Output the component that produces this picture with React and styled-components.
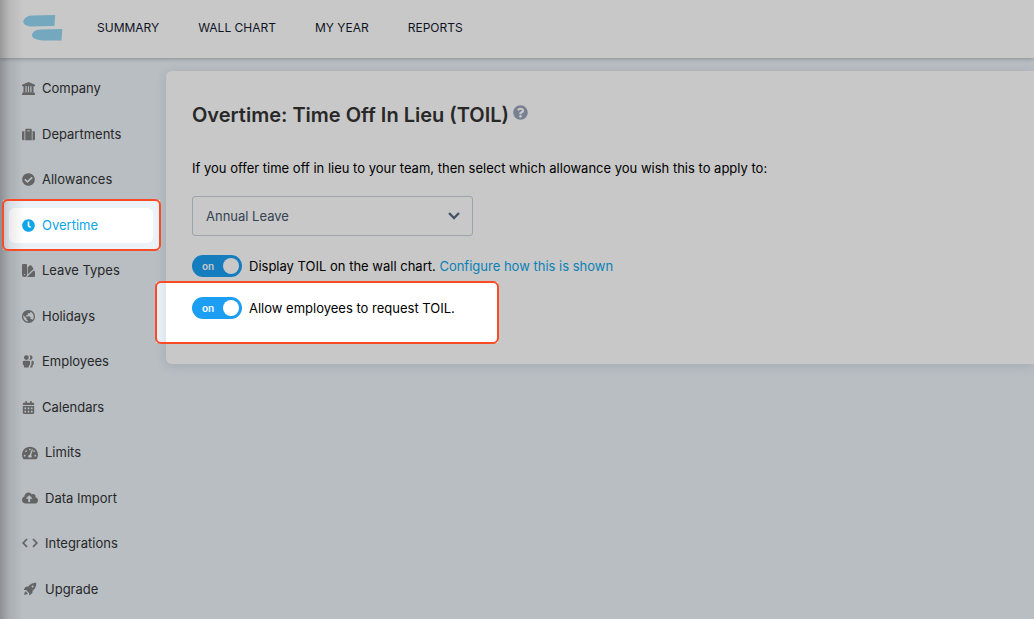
import styled, { createGlobalStyle } from 'styled-components';
import {
    FaSuitcase, FaCheckCircle, FaClock,
    FaCalendarAlt, FaTachometerAlt, FaCloudUploadAlt, FaQuestionCircle
} from 'react-icons/fa';

const topLinks = ['SUMMARY', 'WALL CHART', 'MY YEAR', 'REPORTS']

const sideLinks = [
    { label: 'Company', icon: <BankIcon /> },
    { label: 'Departments', icon: <FaSuitcase /> },
    { label: 'Allowances', icon: <FaCheckCircle /> },
    { label: 'Overtime', icon: <FaClock />, active: true },
    { label: 'Leave Types', icon: <SwatchIcon /> },
    { label: 'Holidays', icon: <GlobeIcon /> },
    { label: 'Employees', icon: <PeopleIcon /> },
    { label: 'Calendars', icon: <FaCalendarAlt /> },
    { label: 'Limits', icon: <FaTachometerAlt />, wide: true },
    { label: 'Data Import', icon: <FaCloudUploadAlt />, wide: true },
    { label: 'Integrations', icon: <BracketsIcon />, wide: true },
    { label: 'Upgrade', icon: <RocketIcon />, wide: true },
]

// areas of the page that the guide leaves undimmed
const spots = [
    { x: 2, y: 199, w: 159, h: 52 },
    { x: 155, y: 281, w: 344, h: 63 },
]

const holes = spots.map(s => `M${s.x + 1} ${s.y + 1}h${s.w - 2}v${s.h - 2}h${2 - s.w}z`).join('')
const dimPath = `path(evenodd, "M0 0H9999V9999H0Z${holes}")`


function Logo() {
    return (
        <svg width="40" height="27" viewBox="0 0 40 27" fill="#95d6f3" aria-hidden="true">
            <path d="M9 .6 L32.300 0 L31.300 11 L7 11.500 C3 11 .5 9 .2 7 C1 3 4 1 9 .6Z" />
            <path d="M17 14.600 L39.300 14 L38.500 25.500 L20 25.500 C14 25 10 23.500 9 21 C9 17 12 15 17 14.600Z" />
        </svg>
    )
}

function BankIcon() {
    return (
        <svg width="1em" height="1em" viewBox="0 0 13 13" fill="currentColor">
            <path d="M6.500 0L13 2.800V4.200H0V2.800z" />
            <path d="M1.500 4h2v6.500h-2zM4.700 4h1.300v6.500H4.700zM7 4h1.300v6.500H7zM9.500 4h2v6.500h-2z" />
            <path d="M1 10.200h11L13 11.500V13H0V11.500z" />
        </svg>
    )
}

function SwatchIcon() {
    return (
        <svg width="1em" height="1em" viewBox="0 0 13 13" fill="currentColor">
            <path fillRule="evenodd" d="M1 0h3q1 0 1 1v9.500a2.500 2.500 0 0 1-5 0V1q0-1 1-1zM2.500 9.900a.6.600 0 1 0 .01 0z" />
            <path d="M5.700 3.200L8 1.300q.7-.4 1.200.2L11.200 4q.4.600-.1 1.200L5.700 10.500z" />
            <path d="M11.300 6.700H12q1 0 1 1V12q0 1-1 1H5z" />
        </svg>
    )
}

function GlobeIcon() {
    return (
        <svg width="1em" height="1em" viewBox="2 2 20 20" fill="currentColor">
            <path d="M12 2C6.480 2 2 6.480 2 12s4.480 10 10 10 10-4.480 10-10S17.520 2 12 2zm-1 17.930c-3.950-.490-7-3.850-7-7.930 0-.620.080-1.210.210-1.790L9 15v1c0 1.100.9 2 2 2v1.930zm6.900-2.540c-.260-.810-1-1.390-1.900-1.390h-1v-3c0-.550-.450-1-1-1H8v-2h2c.550 0 1-.450 1-1V7h2c1.100 0 2-.9 2-2v-.410c2.930 1.190 5 4.060 5 7.410 0 2.080-.8 3.970-2.100 5.390z" />
        </svg>
    )
}

function PeopleIcon() {
    return (
        <svg width="1em" height="1em" viewBox="0 0 14 14" fill="currentColor">
            <circle cx="4.700" cy="2.800" r="2.600" />
            <path d="M2.300 6.200h5q1.500 0 1.500 1.500v1.800q0 1.200-1.200 1.500L7.200 13.500h-5L1.900 11Q.8 10.700.8 9.500V7.700q0-1.500 1.500-1.500z" />
            <path d="M8 .3a2.600 2.600 0 1 1 0 5A4 4 0 0 0 8 .3z" />
            <path d="M10.300 6.200h.9q1.500 0 1.500 1.500v1.800q0 1.200-1.200 1.500l-.4 2.500H8.800l.4-2q1-.5 1-2V7.500q.2-.7.100-1.300z" />
        </svg>
    )
}

function BracketsIcon() {
    return (
        <svg width="1em" height="1em" viewBox="0 0 16 16" fill="none" stroke="currentColor" strokeWidth="1.800">
            <path d="M5 3L1.200 7L5 11M11 3L14.800 7L11 11" />
        </svg>
    )
}

function RocketIcon() {
    return (
        <svg width="1em" height="1em" viewBox="0 0 16 16" fill="currentColor">
            <path fillRule="evenodd" d="M14.200 1.800Q10 1.400 7.300 4.300L6.300 5.400Q4 5.200 3 6.600L1.700 9L4 8.900L7.100 12L7 14.300L9.400 13Q10.800 12 10.600 9.700L11.700 8.700Q14.600 6 14.200 1.800zM10.600 4.500a1 1 0 1 1 0 2a1 1 0 0 1 0-2z" />
            <path d="M3.600 10.200L5.800 12.400Q4.600 14 2.200 13.800Q2 11.400 3.600 10.200z" />
        </svg>
    )
}

function Toggle({ id, children }) {
    return (
        <ToggleRow>
            <Switch>
                <input type="checkbox" id={id} defaultChecked />
                <span aria-hidden="true">on</span>
            </Switch>
            <div>{children}</div>
        </ToggleRow>
    )
}

function App() {
    return (
        <>
            <GlobalStyle />
            <Page>
                <Header>
                    <Logo />
                    <TopNav>
                        {topLinks.map(t => <a href="#" key={t}>{t}</a>)}
                    </TopNav>
                </Header>
                <Body>
                    <SideNav>
                        {sideLinks.map(s => (
                            <SideLink href="#" key={s.label} $active={s.active} $wide={s.wide}>
                                <i>{s.icon}</i>
                                {s.label}
                            </SideLink>
                        ))}
                    </SideNav>
                    <Card>
                        <Title>
                            Overtime: Time Off In Lieu (TOIL)
                            <FaQuestionCircle />
                        </Title>
                        <Intro htmlFor="allowance">If you offer time off in lieu to your team, then select which allowance you wish this to apply to:</Intro>
                        <SelectBox>
                            <select id="allowance">
                                <option>Annual Leave</option>
                            </select>
                            <svg width="12" height="8" viewBox="0 0 12 8" fill="none" stroke="#5a6b85" strokeWidth="2.400">
                                <path d="M1 1L6 6L11 1" />
                            </svg>
                        </SelectBox>
                        <Toggle id="display">
                            <label htmlFor="display">Display TOIL on the wall chart.</label> <a href="#">Configure how this is shown</a>
                        </Toggle>
                        <Toggle id="request">
                            <label htmlFor="request">Allow employees to request TOIL.</label>
                        </Toggle>
                    </Card>
                </Body>
            </Page>
            <EdgeShade />
            <Dim />
            {spots.map(s => (
                <Spot key={s.y} style={{ left: s.x, top: s.y, width: s.w, height: s.h }} />
            ))}
        </>
    );
}

export default App;

const GlobalStyle = createGlobalStyle`
    *{ box-sizing: border-box; }

    body{
        margin: 0;
        background: #ebf2f8;
        color: #000;
        font-family: Inter, "Liberation Sans", sans-serif;
        font-size: 13px;
        line-height: 1.5;
    }

    a{
        color: #0ea5e9;
        text-decoration: none;
    }
`

const Page = styled.div`
    display: flex;
    flex-direction: column;
    min-height: 100vh;
`

const Header = styled.header`
    display: flex;
    align-items: center;
    gap: 34px;
    height: 58px;
    padding: 0 23px 2px;
    background: #fff;
    box-shadow: 0 1px 4px rgba(0, 0, 0, 0.25);
    z-index: 1;
`

const TopNav = styled.nav`
    display: flex;
    gap: 39px;

    a{
        color: #131a30;
        font-size: 12px;
        white-space: nowrap;
    }
`

const Body = styled.div`
    display: flex;
    align-items: flex-start;
    flex: 1;
`

const SideNav = styled.nav`
    display: flex;
    flex-direction: column;
    gap: 10px;
    flex: 0 0 166px;
    padding: 13px 13px 0 9px;
`

const SideLink = styled.a`
    display: flex;
    align-items: center;
    gap: 7px;
    padding: 8px 13px;
    border-radius: 6px;
    background: ${p => p.$active ? '#fff' : 'none'};
    color: ${p => p.$active ? '#0ea5e9' : '#333'};

    i{
        display: flex;
        color: ${p => p.$active ? '#0ea5e9' : '#808080'};
        font-size: ${p => p.$wide ? '16px' : '13px'};
    }
`

const Card = styled.main`
    flex: 1;
    margin-top: 13px;
    padding: 29px 26px 45px;
    background: #fff;
    border-radius: 6px 0 0 6px;
    box-shadow: 0 2px 12px rgba(60, 80, 100, 0.15);
`

const Title = styled.h1`
    display: flex;
    gap: 4px;
    margin: 0 0 28px;
    color: #333;
    font-size: 20px;
    font-weight: 600;
    line-height: 30px;

    svg{
        margin-top: 5px;
        color: #9aa5bb;
        font-size: 15px;
    }
`

const Intro = styled.label`
    display: block;
    margin-bottom: 18px;
    line-height: 20px;
`

const SelectBox = styled.div`
    display: grid;
    align-items: center;
    width: 281px;
    margin-bottom: 19px;

    select{
        grid-area: 1 / 1;
        height: 40px;
        padding: 1px 13px 0;
        appearance: none;
        border: 1px solid #cbd0dd;
        border-radius: 3px;
        background: none;
        color: #46566c;
        font: inherit;
    }

    svg{
        grid-area: 1 / 1;
        justify-self: end;
        margin-right: 13px;
        pointer-events: none;
    }
`

const ToggleRow = styled.div`
    display: flex;
    align-items: center;
    gap: 7px;
    height: 22px;
    line-height: 22px;

    & + &{ margin-top: 20px; }
`

const Switch = styled.div`
    display: grid;
    align-items: center;
    width: 50px;

    input{
        grid-area: 1 / 1;
        display: flex;
        justify-content: flex-end;
        width: 50px;
        height: 22px;
        margin: 0;
        padding: 3px;
        appearance: none;
        border-radius: 11px;
        background: #1c9ff3;
        cursor: pointer;
    }

    input:after{
        content: '';
        width: 16px;
        height: 16px;
        border-radius: 50%;
        background: #fff;
    }

    input:not(:checked){
        justify-content: flex-start;
        background: #b8c2cc;
    }

    span{
        grid-area: 1 / 1;
        padding-left: 10px;
        color: #fff;
        font-size: 10px;
        font-weight: 600;
        line-height: 20px;
        pointer-events: none;
    }
`

const EdgeShade = styled.div`
    position: fixed;
    inset: 0 auto 0 0;
    width: 24px;
    background: linear-gradient(to right, rgba(0, 0, 0, 0.24), rgba(0, 0, 0, 0.08) 40%, rgba(0, 0, 0, 0));
    z-index: 2;
    pointer-events: none;
`

const Dim = styled.div`
    position: fixed;
    inset: 0;
    background: rgba(0, 0, 0, 0.216);
    clip-path: ${dimPath};
    z-index: 3;
    pointer-events: none;
`

const Spot = styled.div`
    position: absolute;
    border: 2px solid #f94b26;
    border-radius: 6px;
    z-index: 4;
    pointer-events: none;
`
